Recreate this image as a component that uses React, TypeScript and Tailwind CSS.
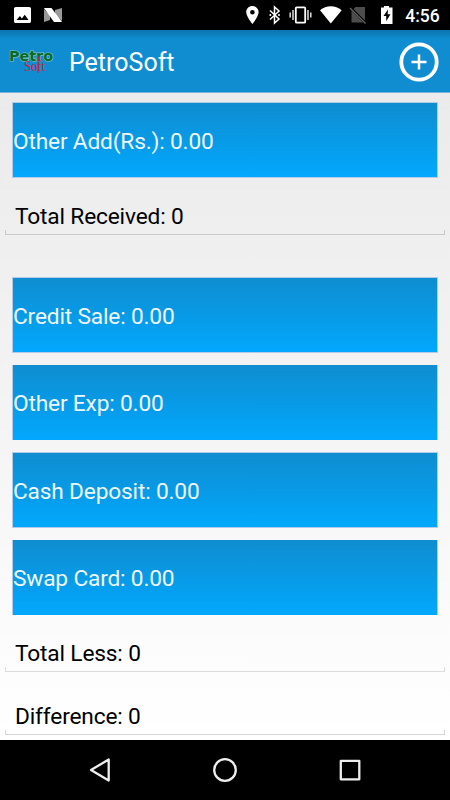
import React from 'react';

interface EntryButtonProps {
  label: string;
  soft?: boolean;
}

const EntryButton: React.FC<EntryButtonProps> = ({ label, soft }) => (
  <button
    className={`flex w-[426px] items-center border-x border-[#b3cbe6] bg-gradient-to-b from-[#0f8dd0] via-[#089ae6] to-[#02a8fe] bg-clip-padding text-left text-[22.7px] leading-none tracking-[-0.17px] text-[#f0f8ff] ${
      soft ? 'h-[76px] border-y pt-1' : 'h-[75px] pt-[3px]'
    }`}
  >
    {label}
  </button>
);

interface TotalFieldProps {
  label: string;
  line: string;
}

const TotalField: React.FC<TotalFieldProps> = ({ label, line }) => (
  <div className="mx-[5px]">
    <div className="px-[10px] text-[22.7px] leading-[34px] tracking-[-0.16px] text-black">{label}</div>
    <div className={`-mt-1 h-[5px] border-x border-b ${line}`} />
  </div>
);

const Logo = () => (
  <svg width="46" height="36" viewBox="0 -4 46 36" className="ml-2">
    <text
      x="1"
      y="13"
      textLength="44"
      lengthAdjust="spacingAndGlyphs"
      fontFamily="DejaVu Sans, sans-serif"
      fontWeight="700"
      fontSize="14.500"
      fill="#056b2b"
      stroke="#8fc4c4"
      strokeWidth="1.200"
      paintOrder="stroke"
    >
      Petro
    </text>
    <text
      x="16"
      y="22.500"
      textLength="21"
      lengthAdjust="spacingAndGlyphs"
      fontFamily="Liberation Serif, serif"
      fontSize="14.500"
      fill="#d0203f"
    >
      Soft
    </text>
    <path d="M32 7.500c-2 1-2 4-2 17.500" fill="none" stroke="#c51f40" strokeWidth="1" />
  </svg>
);

const StatusBar = () => (
  <div className="flex h-[30px] items-center bg-black text-white">
    <svg width="450" height="30" viewBox="0 0 450 30" fill="#fff">
      {/* Picture notification */}
      <path
        fillRule="evenodd"
        d="M15.800 7h13.400c1 0 1.800.8 1.800 1.800v12.400c0 1-.8 1.800-1.800 1.800H15.800c-1 0-1.800-.8-1.800-1.800V8.800c0-1 .8-1.800 1.800-1.800ZM16.500 20h12l-3.800-5.200-2.800 3.600-2-2.400Z"
      />
      {/* Android N */}
      <path d="M44 9l6 6v5l-6 2ZM62 8v13l-7-6v-5Z" fill="#999" />
      <path d="M44 8h7.500L62 22h-8Z" />
      {/* Location */}
      <path
        fillRule="evenodd"
        d="M252.400 6c-3.500 0-6.200 2.700-6.200 6.100 0 4.600 6.200 11.900 6.200 11.900s6.200-7.300 6.200-11.900c0-3.400-2.700-6.100-6.200-6.100Zm0 4a2.300 2.300 0 1 1 0 4.600 2.300 2.300 0 0 1 0-4.600Z"
      />
      {/* Bluetooth */}
      <path d="M270 10.500l9 8.500-4.500 4V7l4.500 4-9 8.500" fill="none" stroke="#fff" strokeWidth="1.500" />
      <circle cx="270.300" cy="15" r="1" />
      <circle cx="279" cy="15" r="1" />
      {/* Vibrate */}
      <rect x="295.800" y="7.300" width="9.400" height="15.400" rx="1" fill="none" stroke="#fff" strokeWidth="1.800" />
      <path d="M293 10v10M290.200 12.500v5M308 10v10M310.800 12.500v5" fill="none" stroke="#ddd" strokeWidth="1.500" />
      {/* Wifi */}
      <path d="M320 10.200C326.300 4.900 335.300 4.900 341.700 10.200L330.800 23.500Z" />
      {/* No sim */}
      <path d="M355.500 7h9.500v13.500L353.500 9ZM351.500 10.500L363 22.500H351.500Z" fill="#4d4d4d" />
      <path d="M350 8l15.500 15.500" stroke="#666" strokeWidth="1.300" />
      {/* Battery */}
      <path
        fillRule="evenodd"
        d="M384 6h5v1.500h3.500V24H381V7.500h3ZM388 9.500l-4.500 6.500h2.700v5.300l4.300-7h-2.800Z"
      />
      <text x="405.300" y="21.500" fontFamily="Roboto, sans-serif" fontWeight="500" fontSize="17.500">
        4:56
      </text>
    </svg>
  </div>
);

const Header = () => (
  <header className="flex h-[63px] items-center border-b border-[#77b3dc] bg-[linear-gradient(#0b74ad_0px,#0f8dd0_9px)] pt-0.5 text-white">
    <Logo />
    <h1 className="ml-[15px] text-[25px] leading-none">PetroSoft</h1>
    <button className="ml-auto mr-[11px]" aria-label="Add">
      <svg width="40" height="40" viewBox="0 0 40 40" fill="none" stroke="#fff">
        <circle cx="20" cy="20" r="17.700" strokeWidth="3.800" />
        <path d="M20 12.500v15M12.500 20h15" strokeWidth="2.500" />
      </svg>
    </button>
  </header>
);

const NavBar = () => (
  <nav className="flex h-[60px] items-center bg-black">
    <svg width="450" height="60" viewBox="0 0 450 60" fill="none" stroke="#eee" strokeWidth="2.300" strokeLinejoin="round">
      <path d="M108.700 19.500v21L91 30Z" />
      <circle cx="225" cy="30" r="10.800" />
      <rect x="340.800" y="20.800" width="18.500" height="18.500" />
    </svg>
  </nav>
);

const App: React.FC = () => {
  return (
    <div className="flex h-[800px] w-[450px] flex-col overflow-hidden font-['Roboto',sans-serif]">
      <StatusBar />
      <Header />
      <main className="h-[647px] bg-gradient-to-b from-[#ebebeb] via-[#f3f3f3] via-45% to-white pt-[9px]">
        <div className="px-3">
          <EntryButton label="Other Add(Rs.): 0.00" soft />
        </div>
        <div className="mt-[22px]">
          <TotalField label="Total Received: 0" line="border-[#c9c9c9]" />
        </div>
        <div className="mt-[42px] flex flex-col px-3">
          <EntryButton label="Credit Sale: 0.00" soft />
          <div className="mt-3">
            <EntryButton label="Other Exp: 0.00" />
          </div>
          <div className="mt-3">
            <EntryButton label="Cash Deposit: 0.00" soft />
          </div>
          <div className="mt-3">
            <EntryButton label="Swap Card: 0.00" />
          </div>
        </div>
        <div className="mt-[22px]">
          <TotalField label="Total Less: 0" line="border-[#dcdcdc]" />
        </div>
        <div className="mt-7">
          <TotalField label="Difference: 0" line="border-[#d5d5d5]" />
        </div>
      </main>
      <NavBar />
    </div>
  );
};

export default App;
